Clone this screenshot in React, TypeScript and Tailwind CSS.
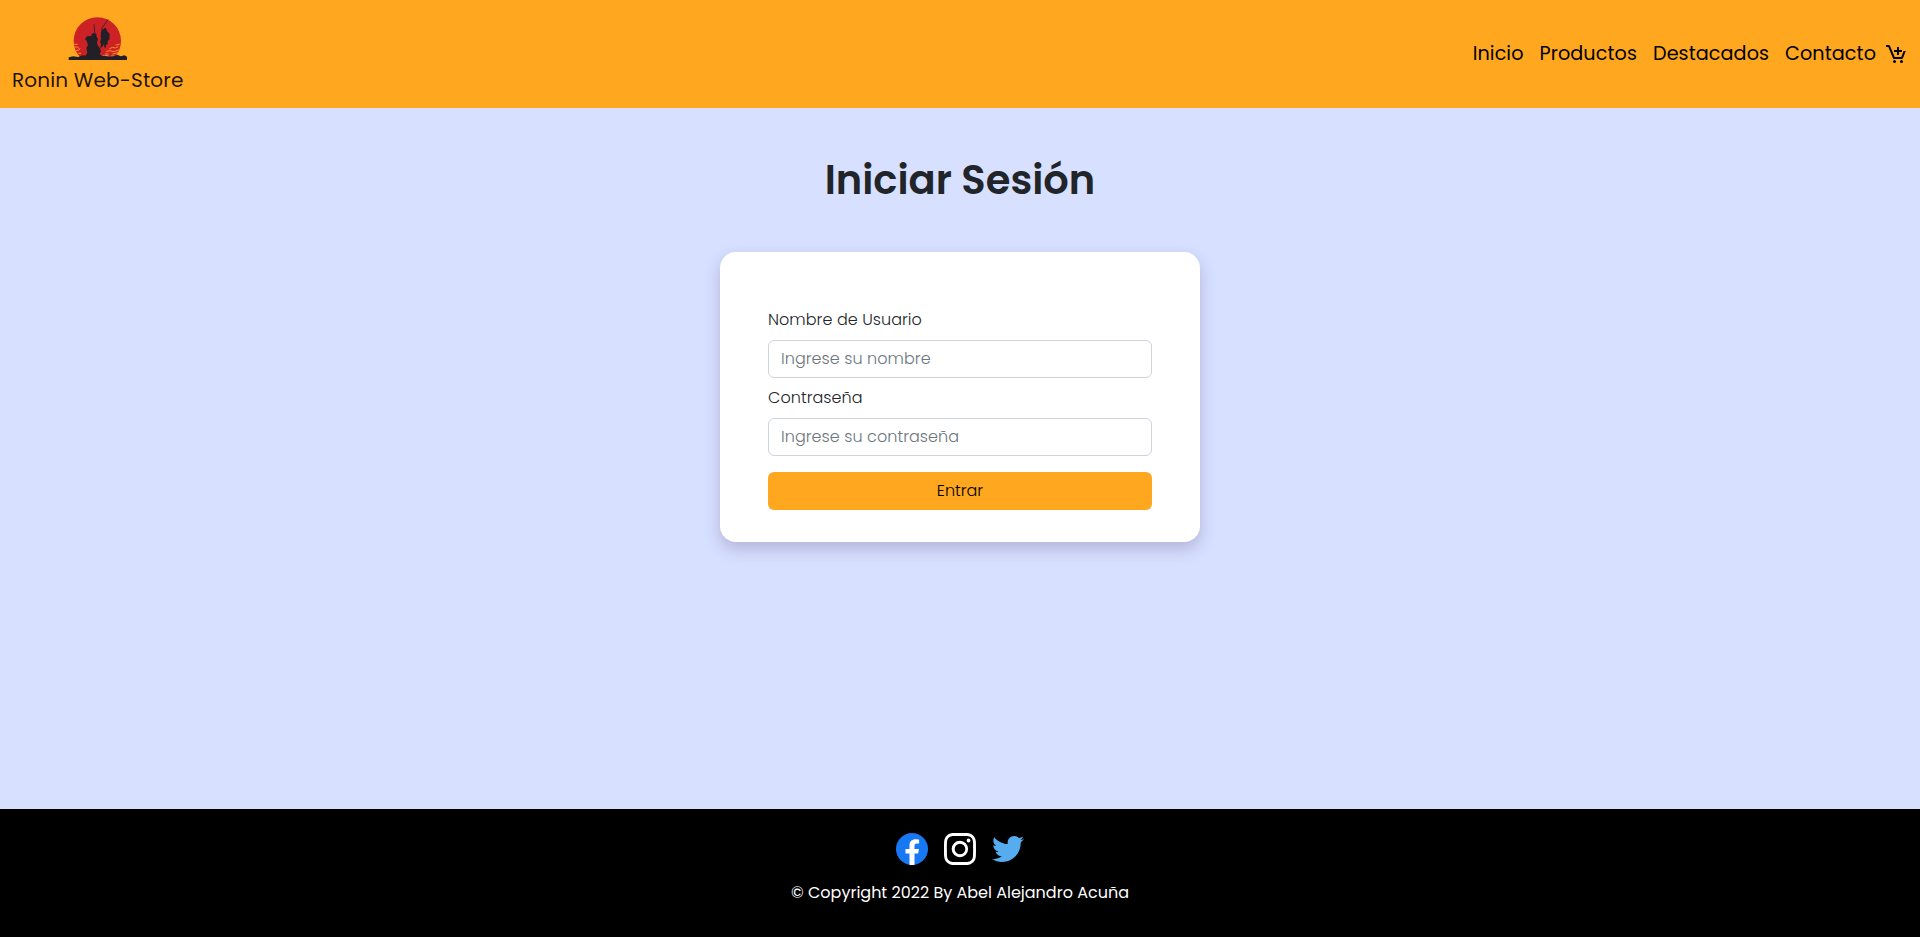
import { BiCartAdd } from "react-icons/bi";
import { BsInstagram } from "react-icons/bs";
import { FaTwitter } from "react-icons/fa";

const links = ["Inicio", "Productos", "Destacados", "Contacto"];

function SamuraiLogo() {
  return (
    <svg viewBox="0 0 192 150" className="h-[50px] w-16" aria-hidden="true">
      <path fill="#cd2225" d="M43 136A71 71 0 1 1 145 136z" />
      <g stroke="#fd8a25" strokeWidth="3" strokeLinecap="round" fill="none">
        <path d="M25 97h9M27 105h8l4 5M31 115h6l5-4M38 124h6" />
        <path d="M131 110l8-4 9 2 8-4M122 118l10-2 12 3 14-5M150 99l10-2M140 126l16-4M118 126h8" />
        <path d="M112 131h14M136 132h10" stroke="#c9a04a" />
      </g>
      <g fill="#231f26">
        <path d="M8 144v-8l14-3 14 2 14-5 20 3 30 1 14-3 14 3 14-1 12-5 10 5 11-3 8 4v10z" />
        <path d="M56 136l8-14-3-14 5-9-4-12-5-6 6-8 12-1 3-7 5-2 8 3 1 8 4 6-3 12 3 9 6 7 3 10-4 8 10 8 2 7z" />
        <path d="M104 72l1-13 5-7 7-5 5 5 1 6 8 7-1 18-5 4v10l-6 2 1 8-5-1-2-9-4 8-6 2 2-11-3-5 3-12z" />
      </g>
      <g stroke="#231f26" strokeLinecap="round" strokeWidth="2.4" fill="none">
        <path d="M87 68l-3-30" />
        <path d="M108 56l-1-7 19-26" />
      </g>
    </svg>
  );
}

function FacebookIcon() {
  return (
    <svg viewBox="0 0 32 32" className="size-8" role="img" aria-label="Facebook">
      <circle cx="16" cy="16" r="16" fill="#1877f2" />
      <path
        fill="#fff"
        d="M22.2 20.6l.7-4.6h-4.4v-3c0-1.3.6-2.5 2.6-2.5h2V6.6s-1.8-.3-3.6-.3c-3.6 0-6 2.2-6 6.200V16h-4v4.600h4v11.200a16 16 0 0 0 5 0V20.600z"
      />
    </svg>
  );
}

function Field({ id, label, placeholder, type }: { id: string; label: string; placeholder: string; type: string }) {
  return (
    <div className="mb-2">
      <label htmlFor={id} className="mb-2 block tracking-[0.05px]">
        {label}
      </label>
      <input
        id={id}
        type={type}
        placeholder={placeholder}
        className="block h-[38px] w-full rounded-md border border-[#ced4da] bg-white px-3 pb-0.5 font-light tracking-[0.05px] outline-none placeholder:text-[#6c757d]"
      />
    </div>
  );
}

export default function App() {
  return (
    <div className="flex min-h-screen flex-col bg-[#d7e0ff] font-['Poppins','Inter',sans-serif] text-base font-light text-[#212529]">
      <header className="flex h-[108px] items-center justify-between bg-[#ffa71f] px-3">
        <a href="#" className="flex flex-col items-center pb-px text-xl/[30px] font-normal text-black/90">
          <SamuraiLogo />
          <span className="mt-[3px] tracking-[0.17px]">Ronin Web-Store</span>
        </a>
        <nav className="flex items-center text-[19.2px]/[30px] font-normal tracking-[0.08px] text-black">
          {links.map((link) => (
            <a key={link} href="#" className="px-2">
              {link}
            </a>
          ))}
          <a href="#" aria-label="Carrito">
            <BiCartAdd className="size-6" />
          </a>
        </nav>
      </header>

      <main className="flex flex-1 flex-col items-center pt-12">
        <h1 className="text-[40px]/[48px] font-semibold">Iniciar Sesión</h1>
        <form className="mt-12 w-[480px] rounded-2xl bg-white px-12 pt-14 pb-8 shadow-[0_7px_16px_rgba(75,50,110,0.25)]">
          <Field id="usuario" label="Nombre de Usuario" placeholder="Ingrese su nombre" type="text" />
          <Field id="clave" label="Contraseña" placeholder="Ingrese su contraseña" type="password" />
          <button type="button" className="mt-2 h-[38px] w-full rounded-md bg-[#ffa71f] text-center text-black">
            Entrar
          </button>
        </form>
      </main>

      <footer className="flex h-32 flex-col items-center bg-black pt-6 font-normal text-white">
        <div className="flex gap-4">
          <FacebookIcon />
          <BsInstagram className="size-8" />
          <FaTwitter className="size-8 text-[#55acee]" />
        </div>
        <p className="mt-4">© Copyright 2022 By Abel Alejandro Acuña</p>
      </footer>
    </div>
  );
}
